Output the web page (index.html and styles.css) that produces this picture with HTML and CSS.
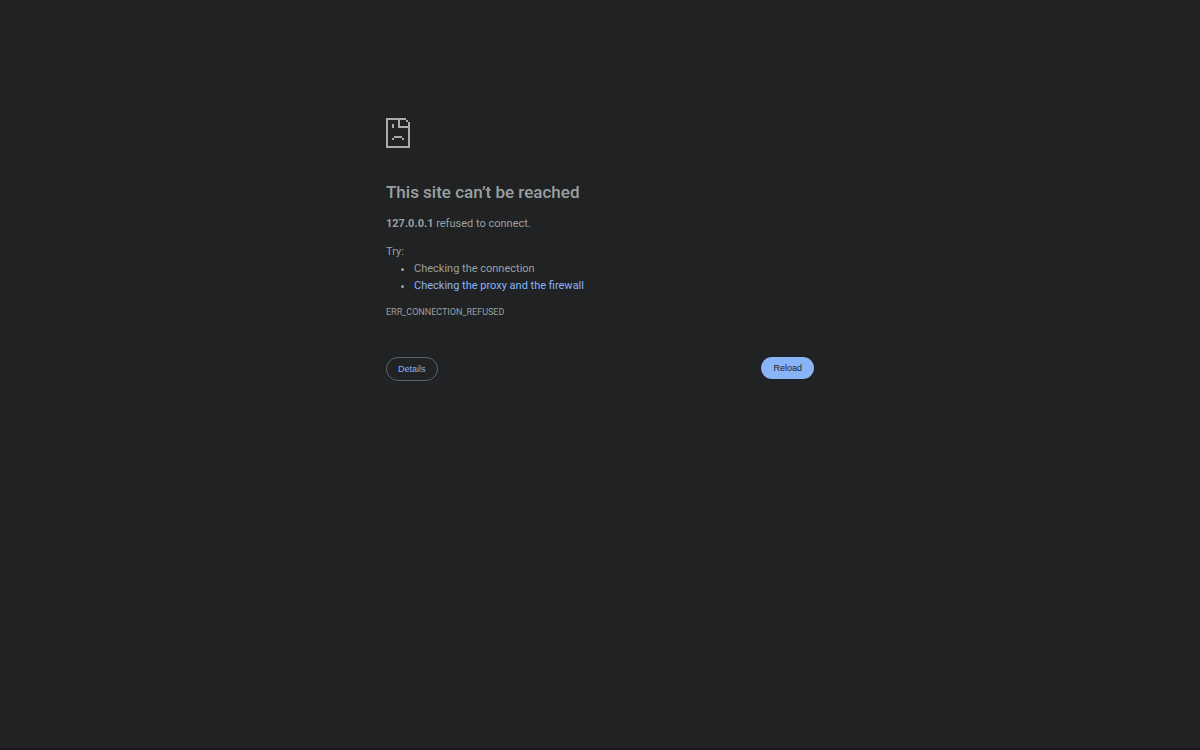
FILE: index.html
```html
<!DOCTYPE html>
<html lang="en">
<head>
<meta charset="utf-8">
<meta name="viewport" content="width=device-width, initial-scale=1">
<title>127.0.0.1</title>
<link rel="stylesheet" href="styles.css">
</head>
<body>
<main class="error">
  <svg class="error-icon" viewBox="0 0 12 15" shape-rendering="crispEdges" aria-hidden="true">
    <path fill="currentColor" d="M0 0H10V1H7V4H11V2H12V15H0ZM1 1V14H11V5H6V1ZM10 1H11V2H10ZM3 3H4V5H3ZM4 9H8V10H4ZM3 10H4V11H3ZM8 10H9V11H8Z" fill-rule="evenodd"/>
  </svg>
  <h1 class="title">This site can’t be reached</h1>
  <p class="summary"><strong>127.0.0.1</strong> refused to connect.</p>
  <div class="suggestions">
    <p class="try">Try:</p>
    <ul class="list">
      <li>Checking the connection</li>
      <li><a class="link" href="#buttons">Checking the proxy and the firewall</a></li>
    </ul>
  </div>
  <p class="code">ERR_CONNECTION_REFUSED</p>
  <div class="buttons" id="buttons">
    <button class="button button-secondary" type="button">Details</button>
    <button class="button button-primary" type="button">Reload</button>
  </div>
</main>
</body>
</html>
```
FILE: styles.css
```css
body {
  margin: 0;
  min-height: 100vh;
  box-sizing: border-box;
  border-bottom: 2px solid #1b181d;
  background: #202223;
  color: #9aa0a1;
  font: 11px/17px Roboto, "Liberation Sans", sans-serif;
}

.error {
  box-sizing: border-box;
  max-width: 428px;
  margin: 0 auto;
  padding-top: 118px;
}

.error-icon {
  display: block;
  width: 24px;
  height: 30px;
  color: #aaabad;
}

.title {
  margin: 33px 0 12px;
  font-size: 17px;
  line-height: 22px;
  font-weight: 500;
}

.summary,
.try,
.code {
  margin: 0;
}

.suggestions {
  margin: 11px 0 10px;
}

.list {
  margin: 0;
  padding-left: 28px;
}

.link {
  color: #8ab4f8;
  text-decoration: none;
}

.code {
  font-size: 9px;
}

.buttons {
  display: flex;
  justify-content: space-between;
  align-items: flex-start;
  margin-top: 36px;
}

.button {
  padding: 0 12px;
  border: 0;
  border-radius: 12px;
  font: 500 9px/22px "Liberation Sans", sans-serif;
}

.button-secondary {
  padding: 0 11px;
  border: 1px solid #5f6368;
  background: transparent;
  color: #8ab4f8;
}

.button-primary {
  background: #8ab4f8;
  color: #202124;
}
```
